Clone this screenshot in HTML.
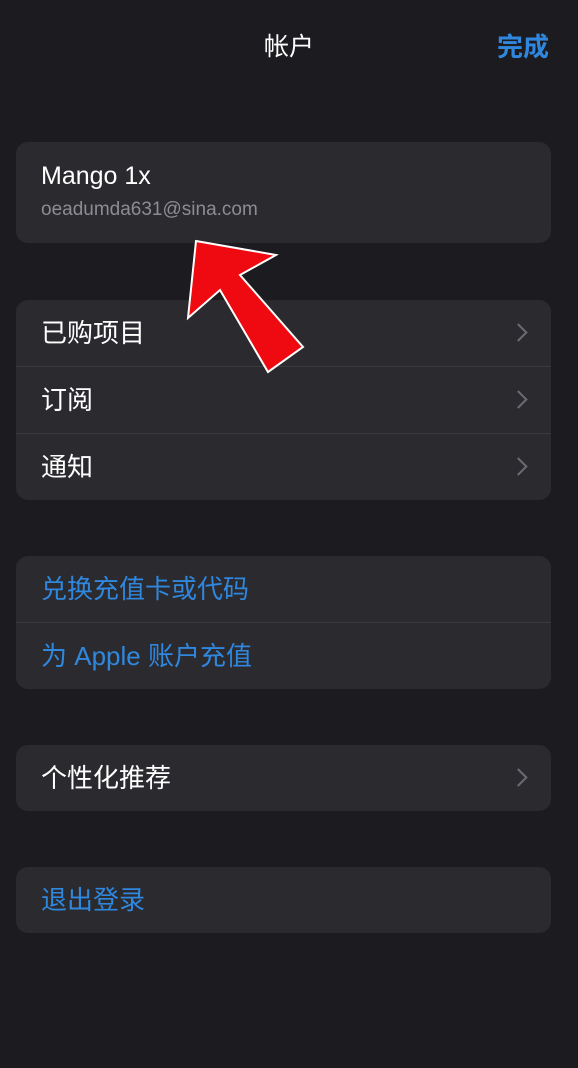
<!DOCTYPE html>
<html><head><meta charset="utf-8"><style>
body{margin:0;width:578px;height:1068px;background:#1c1b1f;font-family:"Liberation Sans","Noto Sans CJK SC",sans-serif;position:relative;overflow:hidden;color:#fff}
.t{position:absolute}
.card{position:absolute;left:16px;width:535px;background:#2b2a2f;border-radius:12px}
.row{position:relative;height:66px;line-height:66px;padding-left:25px;font-size:26px}
.row+.row{border-top:1px solid #3b3a40}
.row.b{color:#2f87de}
.chev{position:absolute;right:26px;top:26px;width:11px;height:11px;border-right:2px solid #6c6b72;border-top:2px solid #6c6b72;transform:rotate(45deg)}
</style></head><body>
<div class="t" style="left:0;top:27px;width:578px;text-align:center;font-size:25px">帐户</div>
<div class="t" style="left:497px;top:27px;font-size:26px;color:#2f87de;font-weight:bold">完成</div>
<div class="card" style="top:142px;height:101px">
<div class="t" style="left:25px;top:20px;font-size:25px">Mango 1x</div>
<div class="t" style="left:25px;top:57px;font-size:19px;color:#8d8c92">oeadumda631@sina.com</div>
</div>
<div class="card" style="top:300px">
<div class="row">已购项目<span class="chev"></span></div>
<div class="row">订阅<span class="chev"></span></div>
<div class="row">通知<span class="chev"></span></div>
</div>
<div class="card" style="top:556px">
<div class="row b">兑换充值卡或代码</div>
<div class="row b">为 Apple 账户充值</div>
</div>
<div class="card" style="top:745px">
<div class="row">个性化推荐<span class="chev"></span></div>
</div>
<div class="card" style="top:867px">
<div class="row b">退出登录</div>
</div>
<svg class="t" style="left:0;top:0" width="578" height="1068"><polygon points="196,241 276,255 240,275 303,347 268,372 220,290 188,318" fill="#ee0a10" stroke="#fff" stroke-width="2"/></svg>
</body></html>
